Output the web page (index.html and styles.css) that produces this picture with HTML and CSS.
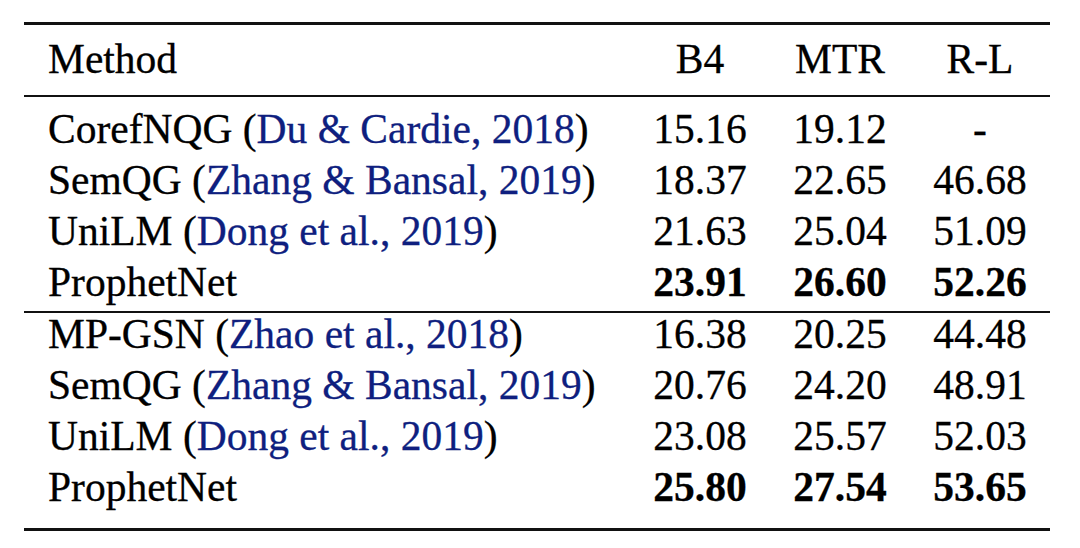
FILE: index.html
```html
<!DOCTYPE html>
<html>
<head>
<meta charset="utf-8">
<link rel="stylesheet" href="styles.css">
</head>
<body>
<div class="wrap">
<table class="results">
  <thead>
    <tr><th class="method">Method</th><th>B4</th><th>MTR</th><th>R-L</th></tr>
  </thead>
  <tbody>
    <tr class="first"><td class="method">CorefNQG (<span class="cite">Du &amp; Cardie, 2018</span>)</td><td>15.16</td><td>19.12</td><td>-</td></tr>
    <tr><td class="method">SemQG (<span class="cite">Zhang &amp; Bansal, 2019</span>)</td><td>18.37</td><td>22.65</td><td>46.68</td></tr>
    <tr><td class="method">UniLM (<span class="cite">Dong et al., 2019</span>)</td><td>21.63</td><td>25.04</td><td>51.09</td></tr>
    <tr class="grp-end"><td class="method">ProphetNet</td><td class="best">23.91</td><td class="best">26.60</td><td class="best">52.26</td></tr>
    <tr class="grp-start"><td class="method">MP-GSN (<span class="cite">Zhao et al., 2018</span>)</td><td>16.38</td><td>20.25</td><td>44.48</td></tr>
    <tr><td class="method">SemQG (<span class="cite">Zhang &amp; Bansal, 2019</span>)</td><td>20.76</td><td>24.20</td><td>48.91</td></tr>
    <tr><td class="method">UniLM (<span class="cite">Dong et al., 2019</span>)</td><td>23.08</td><td>25.57</td><td>52.03</td></tr>
    <tr class="last"><td class="method">ProphetNet</td><td class="best">25.80</td><td class="best">27.54</td><td class="best">53.65</td></tr>
  </tbody>
</table>
</div>
</body>
</html>
```

FILE: styles.css
```css
html, body {
  margin: 0;
  padding: 0;
  background: #ffffff;
}

.wrap {
  padding: 22px 30px 0 24px;
}

.results {
  width: 1026px;
  border-spacing: 0;
  border-collapse: separate;
  border-top: 3px solid #111;
  border-bottom: 3px solid #111;
  font-family: "Liberation Serif", "Times New Roman", serif;
  font-size: 41.5px;
  color: #000;
  -webkit-text-stroke: 0.3px currentColor;
  table-layout: fixed;
}

.results th,
.results td {
  font-weight: normal;
  line-height: 42px;
  padding: 4px 0 5px 0;
  text-align: center;
  width: 140px;
  white-space: nowrap;
}

.results .method {
  width: 582px;
  padding-left: 24px;
  text-align: left;
}

.results th {
  padding-top: 13px;
  padding-bottom: 15px;
  border-bottom: 2px solid #111;
}

.results .first td {
  padding-top: 11px;
}

.results .grp-end td {
  padding-bottom: 8px;
  border-bottom: 2px solid #111;
}

.results .grp-start td {
  padding-top: 0;
}

.results .last td {
  padding-bottom: 20px;
}

.results .best {
  font-weight: bold;
}

.cite {
  color: #0f1f7f;
}
```
